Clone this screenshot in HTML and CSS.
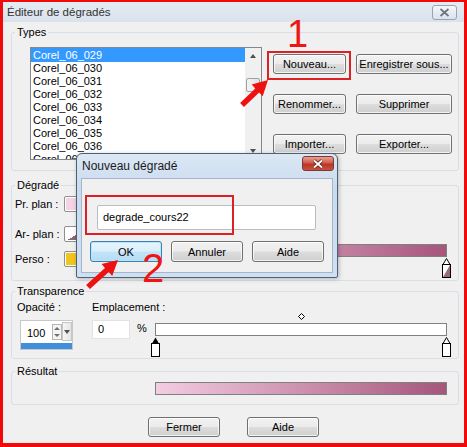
FILE: index.html
```html
<!DOCTYPE html>
<html lang="fr">
<head>
  <meta charset="UTF-8">
  <title>Éditeur de dégradés</title>
  <link rel="stylesheet" href="styles.css">
</head>
<body>
  <div class="window">
    <div class="titlebar">
      <span class="title">Éditeur de dégradés</span>
      <span class="close">
        <svg width="11" height="9" viewBox="0 0 11 9"><path d="M1.5 1 L9.5 8 M9.5 1 L1.5 8" stroke="#6b7480" stroke-width="1.7" fill="none"/></svg>
      </span>
    </div>

    <div class="content">
      <fieldset class="group">
        <legend>Types</legend>
        <div class="types-row">
          <div class="listbox">
            <div class="items">
              <div class="item sel">Corel_06_029</div>
              <div class="item">Corel_06_030</div>
              <div class="item">Corel_06_031</div>
              <div class="item">Corel_06_032</div>
              <div class="item">Corel_06_033</div>
              <div class="item">Corel_06_034</div>
              <div class="item">Corel_06_035</div>
              <div class="item">Corel_06_036</div>
              <div class="item">Corel_06_037</div>
            </div>
            <div class="scrollbar">
              <span class="sb-btn"><i class="tri-up"></i></span>
              <span class="thumb"></span>
              <span class="sb-btn last"><i class="tri-down"></i></span>
            </div>
          </div>
          <div class="type-buttons">
            <button class="btn">Nouveau...</button>
            <button class="btn">Enregistrer sous...</button>
            <button class="btn">Renommer...</button>
            <button class="btn">Supprimer</button>
            <button class="btn">Importer...</button>
            <button class="btn">Exporter...</button>
          </div>
        </div>
      </fieldset>

      <fieldset class="group degrade">
        <legend>Dégradé</legend>
        <div class="degrade-row">
          <div class="color-col">
            <div class="color-row r1"><span class="lbl">Pr. plan :</span><span class="swatch pink"></span></div>
            <div class="color-row r2"><span class="lbl">Ar- plan :</span><span class="swatch mauve"></span></div>
            <div class="color-row r3"><span class="lbl">Perso :</span><span class="swatch yellow"></span></div>
          </div>
          <div class="bar-col">
            <div class="gbar grad"></div>
            <div class="stops">
              <svg class="stop first" width="9" height="20" viewBox="0 0 9 20"><path d="M4.5 0.5 L8 6.5 L1 6.5 Z" fill="#000"/><rect x="0.5" y="6.5" width="8" height="13" fill="#fff" stroke="#000"/><path d="M8 7 L8 19 L1 19 Z" fill="#f2cbe0"/></svg>
              <svg class="stop last" width="9" height="20" viewBox="0 0 9 20"><path d="M4.5 0.5 L8 6.5 L1 6.5 Z" fill="#fff" stroke="#000"/><rect x="0.5" y="6.5" width="8" height="13" fill="#fff" stroke="#000"/><path d="M8 7 L8 19 L1 19 Z" fill="#9c6a7c"/></svg>
            </div>
          </div>
        </div>
      </fieldset>

      <fieldset class="group transp">
        <legend>Transparence</legend>
        <div class="transp-row">
          <div class="opac-col">
            <div class="lbl">Opacité :</div>
            <div class="spin">
              <div class="spin-top">
                <span class="spin-val">100</span>
                <span class="spin-arrows"><i class="tri-up small"></i><i class="tri-down small"></i></span>
                <span class="spin-drop"><i class="tri-down"></i></span>
              </div>
              <div class="spin-bar"></div>
            </div>
          </div>
          <div class="place-col">
            <div class="lbl">Emplacement :</div>
            <div class="place-row">
              <div class="num">0</div>
              <span class="pct">%</span>
              <div class="slider">
                <svg class="diamond" width="7" height="7" viewBox="0 0 7 7"><path d="M3.5 0.5 L6.5 3.5 L3.5 6.5 L0.5 3.5 Z" fill="#fff" stroke="#000"/></svg>
                <div class="gbar white"></div>
                <div class="stops">
                  <svg class="stop first" width="9" height="20" viewBox="0 0 9 20"><path d="M4.5 0.5 L8 6.5 L1 6.5 Z" fill="#000"/><rect x="0.5" y="6.5" width="8" height="13" fill="#fff" stroke="#000"/></svg>
                  <svg class="stop last" width="9" height="20" viewBox="0 0 9 20"><path d="M4.5 0.5 L8 6.5 L1 6.5 Z" fill="#fff" stroke="#000"/><rect x="0.5" y="6.5" width="8" height="13" fill="#fff" stroke="#000"/></svg>
                </div>
              </div>
            </div>
          </div>
        </div>
      </fieldset>

      <fieldset class="group result">
        <legend>Résultat</legend>
        <div class="result-row">
          <div class="gbar grad"></div>
        </div>
      </fieldset>

      <div class="bottom-buttons">
        <button class="btn">Fermer</button>
        <button class="btn">Aide</button>
      </div>
    </div>

    <!-- boite de dialogue par dessus -->
    <div class="dialog">
      <div class="dialog-head">
        <span class="dialog-title">Nouveau dégradé</span>
        <span class="dialog-close">
          <svg width="12" height="10" viewBox="0 0 12 10"><path d="M2 1.5 L10 8.5 M10 1.5 L2 8.5" stroke="#5a1b16" stroke-width="3.4" fill="none"/><path d="M2 1.5 L10 8.5 M10 1.5 L2 8.5" stroke="#fff" stroke-width="1.8" fill="none"/></svg>
        </span>
      </div>
      <div class="dialog-client">
        <div class="name-input">degrade_cours22</div>
        <div class="dialog-buttons">
          <button class="btn big default">OK</button>
          <button class="btn big">Annuler</button>
          <button class="btn big">Aide</button>
        </div>
      </div>
    </div>
  </div>

  <!-- annotations du tuto -->
  <div class="mark box1"></div>
  <div class="mark box2"></div>
  <span class="note n1">1</span>
  <span class="note n2">2</span>
  <svg class="arrows" width="467" height="447" viewBox="0 0 467 447">
    <polygon points="240.1,103 255.3,88.4 251.7,84.6 268,80 262.7,96.2 259.1,92.4 243.9,107" fill="#ee1111"/>
    <polygon points="86.1,284.9 105,267.9 101.6,264.1 118,260 112.2,275.9 108.8,272.1 89.9,289.1" fill="#ee1111"/>
  </svg>
</body>
</html>
```

FILE: styles.css
```css
* {
  box-sizing: border-box;
}

body {
  margin: 0;
  font-family: "Liberation Sans", Arial, sans-serif;
  font-size: 11px;
  color: #000;
  background: #fff;
}

.window {
  position: relative;
  width: 467px;
  height: 447px;
  border: solid #f20a0a;
  border-width: 2px 3px 4px 3px;
  background: #f0f0f0;
}

.titlebar {
  height: 20px;
  display: flex;
  justify-content: space-between;
  align-items: center;
  padding-left: 4px;
  background: linear-gradient(#e6ecf3, #d9e2ec);
}

.title {
  font-size: 11.5px;
  color: #333;
}

.close {
  width: 25px;
  height: 15px;
  margin-right: 7px;
  border: 1px solid #9aa4b1;
  border-radius: 3px;
  background: linear-gradient(#f4f6f9, #dde3ea);
  display: flex;
  align-items: center;
  justify-content: center;
}

.content {
  padding: 0 5px 0 8px;
}

.group {
  margin: 3px 0 0;
  padding: 0;
  min-width: 0;
  border: 1px solid #d5dfe5;
  border-radius: 3px;
}

.group legend {
  margin-left: 3px;
  padding: 0 2px;
  line-height: 14px;
}

/* Types */
.types-row {
  display: flex;
  padding: 8px 0 10px 18px;
}

.listbox {
  width: 232px;
  height: 113px;
  border: 1px solid #828790;
  background: #fff;
  display: flex;
}

.items {
  flex: 1;
  overflow: hidden;
}

.item {
  height: 13px;
  line-height: 13px;
  padding-left: 2px;
  white-space: nowrap;
}

.item.sel {
  height: 14px;
  line-height: 15px;
  background: #3399ff;
  color: #fff;
}

.scrollbar {
  width: 16px;
  display: flex;
  flex-direction: column;
  align-items: center;
  background: #f0f0f0;
}

.sb-btn {
  height: 16px;
  width: 16px;
  display: flex;
  align-items: center;
  justify-content: center;
}

.sb-btn.last {
  margin-top: auto;
}

.thumb {
  margin-top: 14px;
  width: 14px;
  height: 14px;
  border: 1px solid #a0a0a0;
  border-radius: 2px;
  background: linear-gradient(90deg, #f3f3f3, #e2e2e2);
}

.tri-up, .tri-down {
  display: block;
  width: 0;
  height: 0;
  border-left: 3.5px solid transparent;
  border-right: 3.5px solid transparent;
}

.tri-up {
  border-bottom: 4px solid #505050;
}

.tri-down {
  border-top: 4px solid #505050;
}

.tri-up.small {
  border-bottom: 3px solid #707070;
  border-left-width: 3px;
  border-right-width: 3px;
}

.tri-down.small {
  border-top: 3px solid #707070;
  border-left-width: 3px;
  border-right-width: 3px;
}

.type-buttons {
  display: grid;
  grid-template-columns: 73px 96px;
  grid-auto-rows: 20px;
  gap: 20px 10px;
  margin: 7px 0 0 11px;
}

.btn {
  font: 11px "Liberation Sans", Arial, sans-serif;
  color: #000;
  height: 20px;
  padding: 0;
  border: 1px solid #707070;
  border-radius: 3px;
  background: linear-gradient(#f2f2f2 0%, #ebebeb 49%, #dddddd 51%, #cfcfcf 100%);
  box-shadow: inset 0 0 0 1px rgba(255, 255, 255, 0.75);
}

/* Dégradé */
.degrade {
  margin-top: 7px;
}

.degrade-row {
  display: grid;
  grid-template-columns: 140px 292px;
  padding: 0 0 2px 3px;
}

.color-row {
  display: flex;
  align-items: center;
  height: 16px;
}

.color-row.r1 { margin-top: 4px; }
.color-row.r2 { margin-top: 14px; }
.color-row.r3 { margin-top: 9px; }

.color-row .lbl {
  width: 49px;
}

.swatch {
  width: 28px;
  height: 16px;
  border: 1px solid #8e8f8f;
  border-radius: 2px;
  box-shadow: inset 0 0 0 1px #fff;
}

.swatch.pink { background: #f5d2e6; }
.swatch.mauve { background: linear-gradient(to bottom right, #fff 50%, #8d6672 50%); }
.swatch.yellow { background: #f1c51c; }

.bar-col {
  padding-top: 52px;
}

.gbar {
  width: 292px;
  height: 13px;
  border: 1px solid #808080;
}

.gbar.grad {
  background: linear-gradient(90deg, #f3cde1, #a6567b);
}

.gbar.white {
  background: #fff;
}

.stops {
  position: relative;
  height: 20px;
  margin-top: 1px;
}

.stop {
  position: absolute;
  top: 0;
  display: block;
}

.stop.first { left: -4px; }
.stop.last { left: 287px; }

/* Transparence */
.transp-row {
  display: flex;
  padding: 2px 0 1px 5px;
}

.lbl {
  line-height: 14px;
}

.opac-col {
  width: 75px;
}

.spin {
  width: 53px;
  height: 30px;
  margin: 6px 0 0 3px;
  border: 1px solid #c8c8c8;
  background: #fff;
  display: flex;
  flex-direction: column;
}

.spin-top {
  flex: 1;
  display: flex;
  align-items: center;
}

.spin-val {
  flex: 1;
  padding-left: 6px;
  padding-top: 2px;
}

.spin-arrows {
  width: 10px;
  height: 16px;
  border: 1px solid #b5b5b5;
  display: flex;
  flex-direction: column;
  justify-content: space-around;
  align-items: center;
  background: #f4f4f4;
}

.spin-drop {
  width: 10px;
  height: 19px;
  border: 1px solid #c5c5c5;
  background: linear-gradient(90deg, #f6f6f6, #e4e4e4);
  display: flex;
  align-items: center;
  justify-content: center;
}

.spin-bar {
  height: 6px;
  margin-top: 1px;
  background: #3f8fdc;
}

.place-row {
  display: flex;
  margin-top: 6px;
}

.num {
  width: 38px;
  height: 19px;
  margin-right: 7px;
  border: 1px solid #e2e2e2;
  background: #fff;
  padding-left: 5px;
  line-height: 17px;
}

.pct {
  width: 18px;
  line-height: 17px;
}

.slider {
  position: relative;
  margin-top: 3px;
}

.diamond {
  position: absolute;
  top: -10px;
  left: 143px;
}

/* Résultat */
.result {
  margin-top: 5px;
}

.result-row {
  padding: 4px 0 9px 143px;
}

.bottom-buttons {
  display: flex;
  gap: 27px;
  margin-top: 12px;
  padding-left: 137px;
}

.bottom-buttons .btn {
  width: 72px;
}

/* Dialogue Nouveau dégradé */
.dialog {
  position: absolute;
  left: 73px;
  top: 151px;
  width: 262px;
  height: 125px;
  border: 1px solid #4f6072;
  border-radius: 6px 6px 2px 2px;
  background: linear-gradient(#dbe7f4, #c9dbef 30%, #cfe0f2);
  display: flex;
  flex-direction: column;
  box-shadow: 1px 1px 4px rgba(0, 0, 0, 0.25);
}

.dialog-head {
  height: 24px;
  display: flex;
  justify-content: space-between;
  align-items: center;
  padding-left: 5px;
}

.dialog-title {
  font-size: 12px;
  color: #1a1a1a;
}

.dialog-close {
  align-self: flex-start;
  width: 32px;
  height: 15px;
  margin: 2px 3px 0 0;
  border: 1px solid #7a3a34;
  border-radius: 3px;
  background: linear-gradient(#e7a193, #cf5c4c 45%, #bb3426 55%, #c8523f);
  display: flex;
  align-items: center;
  justify-content: center;
}

.dialog-client {
  height: 95px;
  margin: 0 4px 4px;
  border: 1px solid #a3b6ca;
  background: #f0f0f0;
  padding: 26px 0 0 8px;
}

.name-input {
  width: 219px;
  height: 25px;
  margin-left: 7px;
  border: 1px solid #b9bdc4;
  border-radius: 2px;
  background: #fff;
  padding-left: 5px;
  line-height: 23px;
}

.dialog-buttons {
  display: flex;
  gap: 9px;
  margin-top: 11px;
}

.btn.big {
  width: 72px;
  height: 21px;
}

.btn.default {
  border-color: #3c7fb1;
  background: linear-gradient(#e8f5fc, #d9effb 49%, #c4e4f7 51%, #b5dcf3);
  box-shadow: inset 0 0 0 1px #b9e6fb;
}

/* annotations rouges */
.mark {
  position: absolute;
  border: 2px solid #dd1f26;
}

.box1 {
  left: 267px;
  top: 51px;
  width: 84px;
  height: 29px;
}

.box2 {
  left: 85px;
  top: 195px;
  width: 149px;
  height: 40px;
}

.note {
  position: absolute;
  color: #f01515;
  font-family: "Liberation Sans", Arial, sans-serif;
  line-height: 1;
}

.n1 {
  left: 287px;
  top: 15px;
  font-size: 38px;
}

.n2 {
  left: 142px;
  top: 248px;
  font-size: 40px;
}

.arrows {
  position: absolute;
  left: 0;
  top: 0;
  pointer-events: none;
}
```
